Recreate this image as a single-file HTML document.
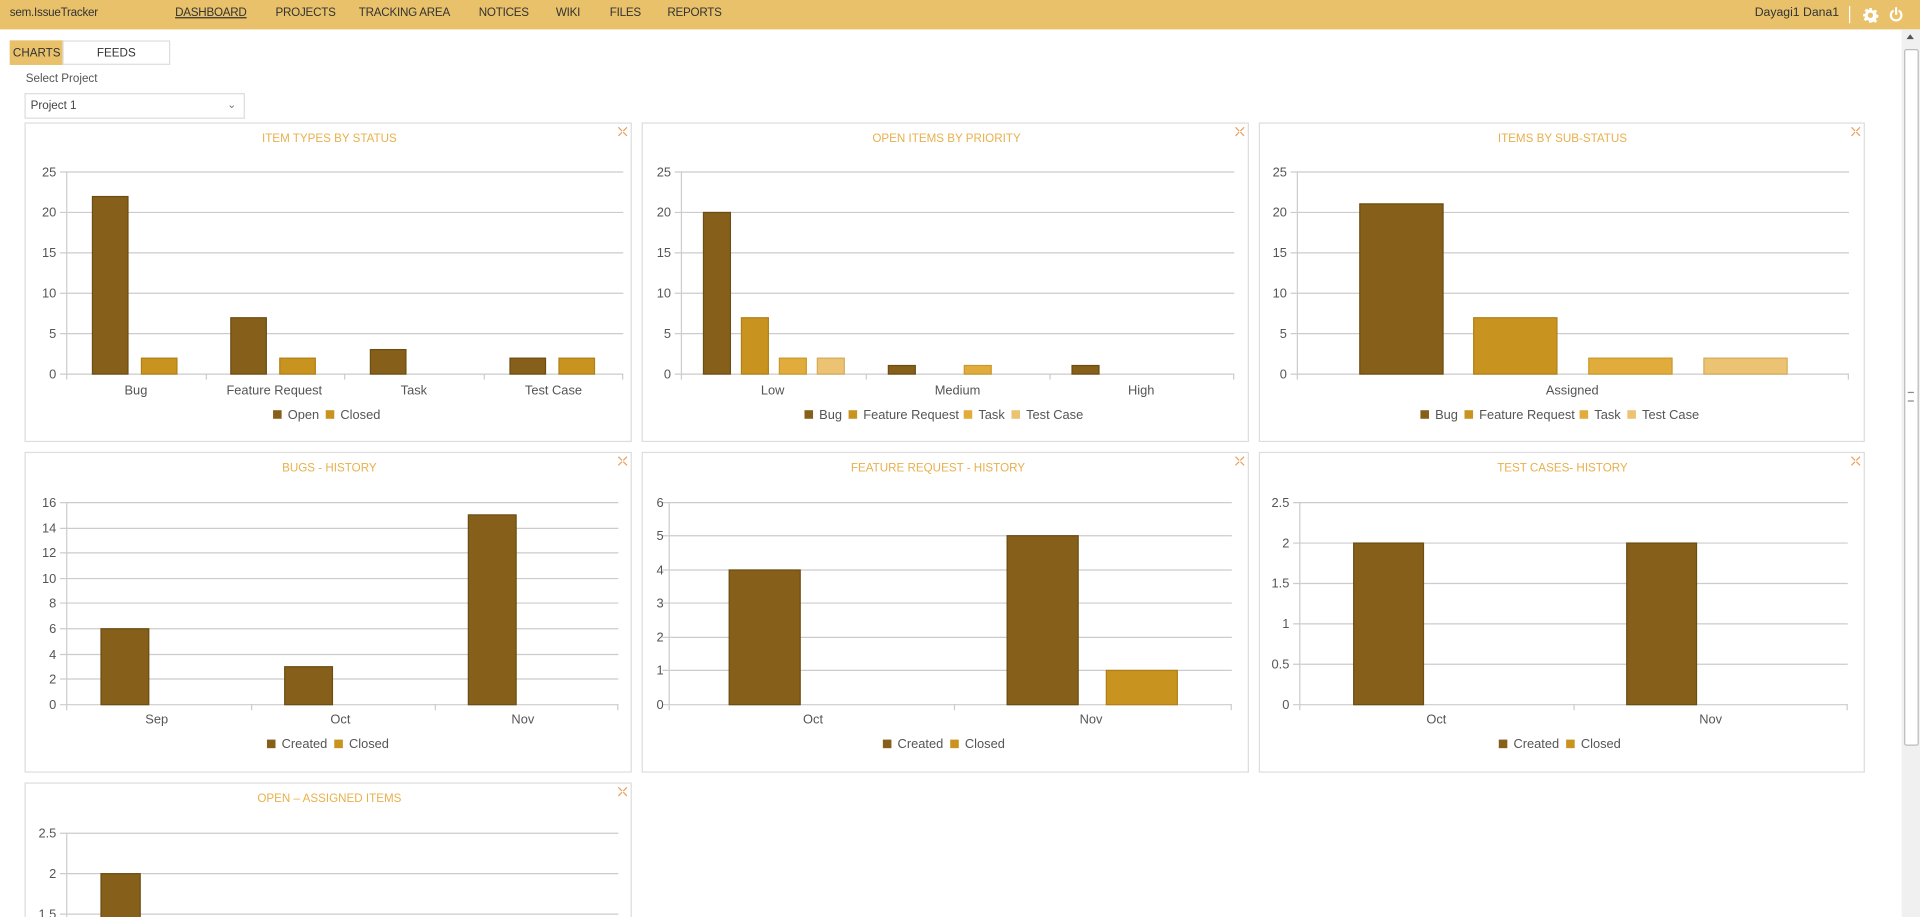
<!DOCTYPE html>
<html><head><meta charset="utf-8"><style>
html,body{margin:0;padding:0;width:1920px;height:917px;overflow:hidden;background:#fff;font-family:"Liberation Sans",sans-serif}
#w{position:absolute;left:0;top:0;width:1568px;height:749px;transform:scale(1.22449);transform-origin:0 0;overflow:hidden}
.hd{position:absolute;left:0;top:0;width:1568px;height:24px;background:#e9c16a}
.hd span{position:absolute;top:5px;font-size:9.5px;color:#333;letter-spacing:-0.2px}
.tab{position:absolute;top:33px;height:20px;line-height:20px;font-size:9.5px;color:#333;text-align:center;box-sizing:border-box;border:1px solid #ddd}
.p{position:absolute;border:1px solid #ddd;box-sizing:border-box;background:#fff;overflow:hidden}
.p svg{position:absolute;left:0;top:0}
svg text{font-family:"Liberation Sans",sans-serif}
.sb{position:absolute;left:1553px;top:24px;width:15px;height:725px;background:#f0f0f0}
</style></head><body><div id="w">
<div class="hd">
<span style="left:8px;font-size:9.5px">sem.IssueTracker</span>
<span style="left:143px;text-decoration:underline">DASHBOARD</span>
<span style="left:225px">PROJECTS</span>
<span style="left:293px">TRACKING AREA</span>
<span style="left:391px">NOTICES</span>
<span style="left:454px">WIKI</span>
<span style="left:498px">FILES</span>
<span style="left:545px">REPORTS</span>
<span style="left:1433px;font-size:10px;letter-spacing:0">Dayagi1 Dana1</span>
<div style="position:absolute;left:1510px;top:5px;width:1px;height:14px;background:#fff"></div>
<svg style="position:absolute;left:1521px;top:6px" width="13" height="13" viewBox="0 0 24 24"><path fill="#fff" d="M10 1h4l.6 3.2 2 .9 2.7-1.9 2.8 2.8-1.9 2.7.9 2 3.2.6v4l-3.2.6-.9 2 1.9 2.7-2.8 2.8-2.7-1.9-2 .9L14 23h-4l-.6-3.2-2-.9-2.7 1.9-2.8-2.8 1.9-2.7-.9-2L1 14v-4l3.2-.6.9-2L3.2 4.7 6 1.9l2.7 1.9 2-.9z M12 8a4 4 0 1 0 0 8a4 4 0 1 0 0-8z" fill-rule="evenodd"/></svg>
<svg style="position:absolute;left:1542px;top:5px" width="13" height="14" viewBox="0 0 24 24"><path d="M7 6.5A8 8 0 1 0 17 6.5" fill="none" stroke="#fff" stroke-width="3.2" stroke-linecap="round"/><path d="M12 2v9" stroke="#fff" stroke-width="3.2" stroke-linecap="round"/></svg>
</div>
<div class="tab" style="left:8px;width:44px;background:#e9c16a;border-color:#e9c16a">CHARTS</div>
<div class="tab" style="left:51px;width:88px;background:#fff">FEEDS</div>
<div style="position:absolute;left:21px;top:59px;font-size:9.5px;color:#555">Select Project</div>
<div style="position:absolute;left:20px;top:76px;width:180px;height:21px;border:1px solid #ddd;box-sizing:border-box;font-size:9.5px;color:#444;line-height:19px;padding-left:4px">Project 1<span style="position:absolute;right:6px;top:-1px;color:#777;font-size:9px">&#8964;</span></div>

<!-- Panel 1 -->
<div class="p" style="left:20px;top:100px;width:496px;height:261px">
<svg width="496" height="261"><g stroke="#ccc" stroke-width="1"><line x1="28" y1="39.5" x2="488" y2="39.5"/><line x1="28" y1="72.5" x2="488" y2="72.5"/><line x1="28" y1="105.5" x2="488" y2="105.5"/><line x1="28" y1="138.5" x2="488" y2="138.5"/><line x1="28" y1="171.5" x2="488" y2="171.5"/><line x1="28" y1="204.5" x2="488" y2="204.5"/><line x1="33.5" y1="39" x2="33.5" y2="209"/><line x1="147.5" y1="204" x2="147.5" y2="209"/><line x1="260.5" y1="204" x2="260.5" y2="209"/><line x1="374.5" y1="204" x2="374.5" y2="209"/><line x1="487.5" y1="204" x2="487.5" y2="209"/></g>
<g stroke="#6b4c12" stroke-width="1"><rect x="54.5" y="59.5" width="29" height="145" fill="#86601a"/><rect x="167.5" y="158.5" width="29" height="46" fill="#86601a"/><rect x="281.5" y="184.5" width="29" height="20" fill="#86601a"/><rect x="395.5" y="191.5" width="29" height="13" fill="#86601a"/></g>
<g stroke="#b07f17"><rect x="94.5" y="191.5" width="29" height="13" fill="#c9931f"/><rect x="207.5" y="191.5" width="29" height="13" fill="#c9931f"/><rect x="435.5" y="191.5" width="29" height="13" fill="#c9931f"/></g>
<g font-size="10.5" fill="#555" text-anchor="end"><text x="25" y="43">25</text><text x="25" y="76">20</text><text x="25" y="109">15</text><text x="25" y="142">10</text><text x="25" y="175">5</text><text x="25" y="208">0</text></g>
<g font-size="10.5" fill="#555" text-anchor="middle"><text x="90" y="221">Bug</text><text x="203" y="221">Feature Request</text><text x="317" y="221">Task</text><text x="431" y="221">Test Case</text></g>
<rect x="202" y="234" width="7" height="7" fill="#86601a"/><text x="214" y="241" font-size="10.5" fill="#555">Open</text><rect x="245" y="234" width="7" height="7" fill="#c9931f"/><text x="257" y="241" font-size="10.5" fill="#555">Closed</text>
<text x="248" y="15" font-size="9.5" fill="#e8b04c" text-anchor="middle">ITEM TYPES BY STATUS</text>
<g stroke="#e8a060" stroke-width="1" fill="none"><path d="M484 3l3 3M491 3l-3 3M484 10l3-3M491 10l-3-3"/></g>
</svg></div>

<!-- Panel 2 -->
<div class="p" style="left:524px;top:100px;width:496px;height:261px">
<svg width="496" height="261"><g stroke="#ccc"><line x1="26" y1="39.5" x2="483" y2="39.5"/><line x1="26" y1="72.5" x2="483" y2="72.5"/><line x1="26" y1="105.5" x2="483" y2="105.5"/><line x1="26" y1="138.5" x2="483" y2="138.5"/><line x1="26" y1="171.5" x2="483" y2="171.5"/><line x1="26" y1="204.5" x2="483" y2="204.5"/><line x1="31.5" y1="39" x2="31.5" y2="209"/><line x1="182.5" y1="204" x2="182.5" y2="209"/><line x1="332.5" y1="204" x2="332.5" y2="209"/><line x1="482.5" y1="204" x2="482.5" y2="209"/></g>
<g stroke="#6b4c12"><rect x="49.5" y="72.5" width="22" height="132" fill="#86601a"/><rect x="200.5" y="197.5" width="22" height="7" fill="#86601a"/><rect x="350.5" y="197.5" width="22" height="7" fill="#86601a"/></g>
<rect x="80.5" y="158.5" width="22" height="46" fill="#c9931f" stroke="#b07f17"/>
<g stroke="#c9992a"><rect x="111.5" y="191.5" width="22" height="13" fill="#e2ac3c"/><rect x="262.5" y="197.5" width="22" height="7" fill="#e2ac3c"/></g>
<rect x="142.5" y="191.5" width="22" height="13" fill="#ebc373" stroke="#d4ab5a"/>
<g font-size="10.5" fill="#555" text-anchor="end"><text x="23" y="43">25</text><text x="23" y="76">20</text><text x="23" y="109">15</text><text x="23" y="142">10</text><text x="23" y="175">5</text><text x="23" y="208">0</text></g>
<g font-size="10.5" fill="#555" text-anchor="middle"><text x="106" y="221">Low</text><text x="257" y="221">Medium</text><text x="407" y="221">High</text></g>
<g font-size="10.5" fill="#555"><rect x="132" y="234" width="7" height="7" fill="#86601a"/><text x="144" y="241">Bug</text><rect x="168" y="234" width="7" height="7" fill="#c9931f"/><text x="180" y="241">Feature Request</text><rect x="262" y="234" width="7" height="7" fill="#e2ac3c"/><text x="274" y="241">Task</text><rect x="301" y="234" width="7" height="7" fill="#ebc373"/><text x="313" y="241">Test Case</text></g>
<text x="248" y="15" font-size="9.5" fill="#e8b04c" text-anchor="middle">OPEN ITEMS BY PRIORITY</text>
<g stroke="#e8a060" fill="none"><path d="M484 3l3 3M491 3l-3 3M484 10l3-3M491 10l-3-3"/></g>
</svg></div>

<!-- Panel 3 -->
<div class="p" style="left:1028px;top:100px;width:495px;height:261px">
<svg width="495" height="261"><g stroke="#ccc"><line x1="25" y1="39.5" x2="481" y2="39.5"/><line x1="25" y1="72.5" x2="481" y2="72.5"/><line x1="25" y1="105.5" x2="481" y2="105.5"/><line x1="25" y1="138.5" x2="481" y2="138.5"/><line x1="25" y1="171.5" x2="481" y2="171.5"/><line x1="25" y1="204.5" x2="481" y2="204.5"/><line x1="30.5" y1="39" x2="30.5" y2="209"/><line x1="480.5" y1="204" x2="480.5" y2="209"/></g>
<rect x="81.5" y="65.5" width="68" height="139" fill="#86601a" stroke="#6b4c12"/>
<rect x="174.5" y="158.5" width="68" height="46" fill="#c9931f" stroke="#b07f17"/>
<rect x="268.5" y="191.5" width="68" height="13" fill="#e2ac3c" stroke="#c9992a"/>
<rect x="362.5" y="191.5" width="68" height="13" fill="#ebc373" stroke="#d4ab5a"/>
<g font-size="10.5" fill="#555" text-anchor="end"><text x="22" y="43">25</text><text x="22" y="76">20</text><text x="22" y="109">15</text><text x="22" y="142">10</text><text x="22" y="175">5</text><text x="22" y="208">0</text></g>
<text x="255" y="221" font-size="10.5" fill="#555" text-anchor="middle">Assigned</text>
<g font-size="10.5" fill="#555"><rect x="131" y="234" width="7" height="7" fill="#86601a"/><text x="143" y="241">Bug</text><rect x="167" y="234" width="7" height="7" fill="#c9931f"/><text x="179" y="241">Feature Request</text><rect x="261" y="234" width="7" height="7" fill="#e2ac3c"/><text x="273" y="241">Task</text><rect x="300" y="234" width="7" height="7" fill="#ebc373"/><text x="312" y="241">Test Case</text></g>
<text x="247" y="15" font-size="9.5" fill="#e8b04c" text-anchor="middle">ITEMS BY SUB-STATUS</text>
<g stroke="#e8a060" fill="none"><path d="M483 3l3 3M490 3l-3 3M483 10l3-3M490 10l-3-3"/></g>
</svg></div>

<!-- Panel 4 -->
<div class="p" style="left:20px;top:369px;width:496px;height:262px">
<svg width="496" height="262"><g stroke="#ccc"><line x1="28" y1="40.5" x2="484" y2="40.5"/><line x1="28" y1="61.5" x2="484" y2="61.5"/><line x1="28" y1="81.5" x2="484" y2="81.5"/><line x1="28" y1="102.5" x2="484" y2="102.5"/><line x1="28" y1="122.5" x2="484" y2="122.5"/><line x1="28" y1="143.5" x2="484" y2="143.5"/><line x1="28" y1="164.5" x2="484" y2="164.5"/><line x1="28" y1="184.5" x2="484" y2="184.5"/><line x1="28" y1="205.5" x2="484" y2="205.5"/><line x1="33.5" y1="40" x2="33.5" y2="210"/><line x1="184.5" y1="205" x2="184.5" y2="210"/><line x1="334.5" y1="205" x2="334.5" y2="210"/><line x1="483.5" y1="205" x2="483.5" y2="210"/></g>
<g stroke="#6b4c12" fill="#86601a"><rect x="61.5" y="143.5" width="39" height="62"/><rect x="211.5" y="174.5" width="39" height="31"/><rect x="361.5" y="50.5" width="39" height="155"/></g>
<g font-size="10.5" fill="#555" text-anchor="end"><text x="25" y="44">16</text><text x="25" y="65">14</text><text x="25" y="85">12</text><text x="25" y="106">10</text><text x="25" y="126">8</text><text x="25" y="147">6</text><text x="25" y="168">4</text><text x="25" y="188">2</text><text x="25" y="209">0</text></g>
<g font-size="10.5" fill="#555" text-anchor="middle"><text x="107" y="221">Sep</text><text x="257" y="221">Oct</text><text x="406" y="221">Nov</text></g>
<g font-size="10.5" fill="#555"><rect x="197" y="234" width="7" height="7" fill="#86601a"/><text x="209" y="241">Created</text><rect x="252" y="234" width="7" height="7" fill="#c9931f"/><text x="264" y="241">Closed</text></g>
<text x="248" y="15" font-size="9.5" fill="#e8b04c" text-anchor="middle">BUGS - HISTORY</text>
<g stroke="#e8a060" fill="none"><path d="M484 3l3 3M491 3l-3 3M484 10l3-3M491 10l-3-3"/></g>
</svg></div>

<!-- Panel 5 -->
<div class="p" style="left:524px;top:369px;width:496px;height:262px">
<svg width="496" height="262"><g stroke="#ccc"><line x1="16" y1="40.5" x2="481" y2="40.5"/><line x1="16" y1="67.5" x2="481" y2="67.5"/><line x1="16" y1="95.5" x2="481" y2="95.5"/><line x1="16" y1="122.5" x2="481" y2="122.5"/><line x1="16" y1="150.5" x2="481" y2="150.5"/><line x1="16" y1="177.5" x2="481" y2="177.5"/><line x1="16" y1="205.5" x2="481" y2="205.5"/><line x1="21.5" y1="40" x2="21.5" y2="210"/><line x1="254.5" y1="205" x2="254.5" y2="210"/><line x1="480.5" y1="205" x2="480.5" y2="210"/></g>
<g stroke="#6b4c12" fill="#86601a"><rect x="70.5" y="95.5" width="58" height="110"/><rect x="297.5" y="67.5" width="58" height="138"/></g>
<rect x="378.5" y="177.5" width="58" height="28" fill="#c9931f" stroke="#b07f17"/>
<g font-size="10.5" fill="#555" text-anchor="end"><text x="17" y="44">6</text><text x="17" y="71">5</text><text x="17" y="99">4</text><text x="17" y="126">3</text><text x="17" y="154">2</text><text x="17" y="181">1</text><text x="17" y="209">0</text></g>
<g font-size="10.5" fill="#555" text-anchor="middle"><text x="139" y="221">Oct</text><text x="366" y="221">Nov</text></g>
<g font-size="10.5" fill="#555"><rect x="196" y="234" width="7" height="7" fill="#86601a"/><text x="208" y="241">Created</text><rect x="251" y="234" width="7" height="7" fill="#c9931f"/><text x="263" y="241">Closed</text></g>
<text x="241" y="15" font-size="9.5" fill="#e8b04c" text-anchor="middle">FEATURE REQUEST - HISTORY</text>
<g stroke="#e8a060" fill="none"><path d="M484 3l3 3M491 3l-3 3M484 10l3-3M491 10l-3-3"/></g>
</svg></div>

<!-- Panel 6 -->
<div class="p" style="left:1028px;top:369px;width:495px;height:262px">
<svg width="495" height="262"><g stroke="#ccc"><line x1="27" y1="40.5" x2="480" y2="40.5"/><line x1="27" y1="73.5" x2="480" y2="73.5"/><line x1="27" y1="106.5" x2="480" y2="106.5"/><line x1="27" y1="139.5" x2="480" y2="139.5"/><line x1="27" y1="172.5" x2="480" y2="172.5"/><line x1="27" y1="205.5" x2="480" y2="205.5"/><line x1="32.5" y1="40" x2="32.5" y2="210"/><line x1="256.5" y1="205" x2="256.5" y2="210"/><line x1="479.5" y1="205" x2="479.5" y2="210"/></g>
<g stroke="#6b4c12" fill="#86601a"><rect x="76.5" y="73.5" width="57" height="132"/><rect x="299.5" y="73.5" width="57" height="132"/></g>
<g font-size="10.5" fill="#555" text-anchor="end"><text x="24" y="44">2.5</text><text x="24" y="77">2</text><text x="24" y="110">1.5</text><text x="24" y="143">1</text><text x="24" y="176">0.5</text><text x="24" y="209">0</text></g>
<g font-size="10.5" fill="#555" text-anchor="middle"><text x="144" y="221">Oct</text><text x="368" y="221">Nov</text></g>
<g font-size="10.5" fill="#555"><rect x="195" y="234" width="7" height="7" fill="#86601a"/><text x="207" y="241">Created</text><rect x="250" y="234" width="7" height="7" fill="#c9931f"/><text x="262" y="241">Closed</text></g>
<text x="247" y="15" font-size="9.5" fill="#e8b04c" text-anchor="middle">TEST CASES- HISTORY</text>
<g stroke="#e8a060" fill="none"><path d="M483 3l3 3M490 3l-3 3M483 10l3-3M490 10l-3-3"/></g>
</svg></div>

<!-- Panel 7 -->
<div class="p" style="left:20px;top:639px;width:496px;height:262px">
<svg width="496" height="262"><g stroke="#ccc"><line x1="28" y1="40.5" x2="484" y2="40.5"/><line x1="28" y1="73.5" x2="484" y2="73.5"/><line x1="28" y1="106.5" x2="484" y2="106.5"/><line x1="28" y1="139.5" x2="484" y2="139.5"/><line x1="33.5" y1="40" x2="33.5" y2="210"/></g>
<rect x="61.5" y="73.5" width="32" height="132" fill="#86601a" stroke="#6b4c12"/>
<g font-size="10.5" fill="#555" text-anchor="end"><text x="25" y="44">2.5</text><text x="25" y="77">2</text><text x="25" y="110">1.5</text><text x="25" y="143">1</text></g>
<text x="248" y="15" font-size="9.5" fill="#e8b04c" text-anchor="middle">OPEN – ASSIGNED ITEMS</text>
<g stroke="#e8a060" fill="none"><path d="M484 3l3 3M491 3l-3 3M484 10l3-3M491 10l-3-3"/></g>
</svg></div>

<div class="sb"><div style="position:absolute;left:4px;top:4px;width:0;height:0;border-left:3.5px solid transparent;border-right:3.5px solid transparent;border-bottom:4px solid #555"></div>
<div style="position:absolute;left:2px;top:16px;width:10px;height:567px;background:#fff;border:1px solid #bbb;border-radius:2px"></div>
<div style="position:absolute;left:5px;top:296px;width:5px;height:6px;border-top:1px solid #888;border-bottom:1px solid #888"></div></div>
</div></body></html>
